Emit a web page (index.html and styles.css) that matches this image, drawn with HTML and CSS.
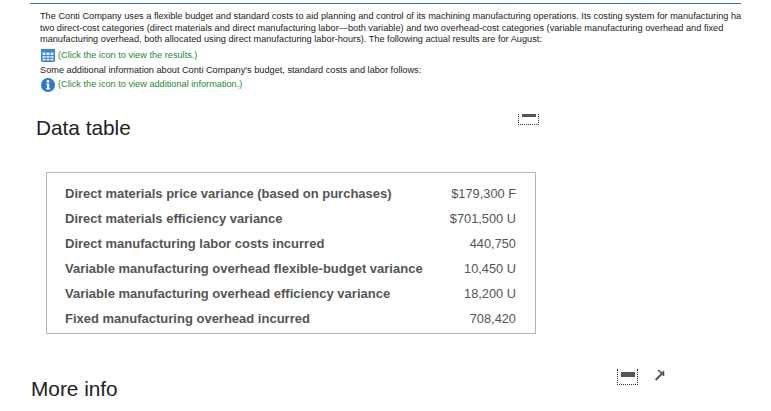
FILE: index.html
```html
<!DOCTYPE html>
<html lang="en">
<head>
  <meta charset="UTF-8">
  <title>Data table</title>
  <link rel="stylesheet" href="styles.css">
</head>
<body>
  <div class="problem">
    <p class="line">The Conti Company uses a flexible budget and standard costs to aid planning and control of its machining manufacturing operations. Its costing system for manufacturing ha</p>
    <p class="line">two direct-cost categories (direct materials and direct manufacturing labor—both variable) and two overhead-cost categories (variable manufacturing overhead and fixed</p>
    <p class="line">manufacturing overhead, both allocated using direct manufacturing labor-hours). The following actual results are for August:</p>
    <p class="hint first-hint">
      <svg class="icon" width="14" height="13" viewBox="0 0 14 13">
        <rect width="14" height="13" rx="1" fill="#3b82dc"/>
        <path d="M1.500 3.500h3v2.500h-3zM5.500 3.500h3v2.500h-3zM9.500 3.500h3v2.500h-3zM1.500 7h3v1.800h-3zM5.500 7h3v1.800h-3zM9.500 7h3v1.800h-3zM1.500 9.800h3v1.800h-3zM5.500 9.800h3v1.800h-3zM9.500 9.800h3v1.800h-3z" fill="#e4eefb"/>
      </svg>
      <span>(Click the icon to view the results.)</span>
    </p>
    <p class="line after">Some additional information about Conti Company's budget, standard costs and labor follows:</p>
    <p class="hint second-hint">
      <svg class="icon" width="14" height="14" viewBox="0 0 15 15">
        <circle cx="7.500" cy="7.500" r="7.500" fill="#2a76d2"/>
        <circle cx="7.500" cy="3.600" r="1.500" fill="#fff"/>
        <path d="M5.600 6h3.200v5h1v1.400H5.400V11h1V7.300h-.8z" fill="#fff"/>
      </svg>
      <span>(Click the icon to view additional information.)</span>
    </p>
  </div>

  <div class="window-head first">
    <h2>Data table</h2>
    <div class="minimize"><span></span></div>
  </div>

  <div class="data-box">
    <table>
      <tr><td>Direct materials price variance (based on purchases)</td><td class="num">$179,300 F</td></tr>
      <tr><td>Direct materials efficiency variance</td><td class="num">$701,500 U</td></tr>
      <tr><td>Direct manufacturing labor costs incurred</td><td class="num">440,750</td></tr>
      <tr><td>Variable manufacturing overhead flexible-budget variance</td><td class="num">10,450 U</td></tr>
      <tr><td>Variable manufacturing overhead efficiency variance</td><td class="num">18,200 U</td></tr>
      <tr><td>Fixed manufacturing overhead incurred</td><td class="num">708,420</td></tr>
    </table>
  </div>

  <div class="window-head second">
    <h2>More info</h2>
    <div class="minimize"><span></span></div>
    <svg class="expand" width="10" height="12" viewBox="0 0 10 12">
      <path d="M0.700 11L8 3.500" fill="none" stroke="#4a5560" stroke-width="2"/>
      <path d="M3 1.200L8.500 5.500M8.500 2V7" fill="none" stroke="#4a5560" stroke-width="1.500"/>
    </svg>
  </div>
</body>
</html>
```

FILE: styles.css
```css
html, body {
  margin: 0;
  padding: 0;
  height: 411px;
  overflow: hidden;
  background: #fff;
}
body {
  font-family: "Liberation Sans", Arial, sans-serif;
  color: #222;
}
.problem {
  width: 701px;
  margin: 3px 0 0 30px;
  padding: 7px 0 0 10px;
  border-top: 1px solid #2f7fb0;
  font-size: 9.2px;
  line-height: 11.5px;
}
.line {
  margin: 0;
  white-space: nowrap;
}
.line.after {
  margin-top: 1.5px;
}
.hint {
  display: flex;
  align-items: center;
  gap: 3px;
  height: 15px;
  padding-left: 1px;
  color: #1d8a2e;
}
.first-hint {
  margin: 2.5px 0 0 0;
}
.second-hint {
  margin: 1.5px 0 0 0;
}
.icon {
  flex: none;
}
.window-head {
  display: flex;
  align-items: flex-start;
}
.window-head h2 {
  margin: 2px 0 0 0;
  font-size: 20.8px;
  font-weight: 400;
  line-height: 24px;
  color: #222;
}
.window-head.first {
  width: 503px;
  margin: 21px 0 0 36px;
  justify-content: space-between;
}
.window-head.second {
  width: 634px;
  margin: 35px 0 0 31px;
}
.window-head.second h2 {
  flex: 1;
  margin-top: 8px;
}
.minimize {
  width: 19px;
  height: 10px;
  border: 1px dotted #333;
  border-top-style: none;
}
.minimize span {
  display: block;
  width: 14px;
  height: 3px;
  margin-left: 3px;
  background: #555;
}
.window-head.second .minimize {
  height: 15px;
}
.window-head.second .minimize span {
  height: 5px;
  margin-top: 3px;
}
.expand {
  margin-left: 17px;
}
.data-box {
  width: 490px;
  height: 162px;
  box-sizing: border-box;
  margin: 32px 0 0 46px;
  padding: 8px 18px 0 18px;
  border: 1px solid #b5b5b5;
}
.data-box table {
  width: 100%;
  border-collapse: collapse;
  color: #555;
}
.data-box td {
  height: 25px;
  padding: 0;
  font-size: 13px;
  font-weight: 700;
}
.data-box td.num {
  text-align: right;
  padding-right: 1px;
  font-size: 12.8px;
  font-weight: 400;
}
```
